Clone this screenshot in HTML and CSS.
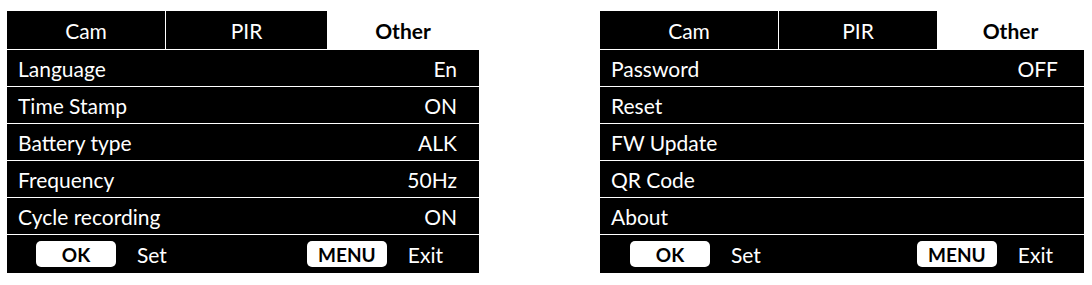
FILE: index.html
```html
<!DOCTYPE html>
<html lang="en">
<head>
  <meta charset="UTF-8" />
  <title>Other settings</title>
  <link rel="stylesheet" href="styles.css">
</head>
<body>
  <div class="screens">
    <!-- Экран 1 -->
    <div class="screen screen-left">
      <div class="tabs">
        <div class="tab">Cam</div>
        <div class="tab">PIR</div>
        <div class="tab tab-active">Other</div>
      </div>
      <div class="row"><span>Language</span><span>En</span></div>
      <div class="row"><span>Time Stamp</span><span>ON</span></div>
      <div class="row"><span>Battery type</span><span>ALK</span></div>
      <div class="row"><span>Frequency</span><span>50Hz</span></div>
      <div class="row"><span>Cycle recording</span><span>ON</span></div>
      <div class="footer">
        <div class="hint">
          <span class="key">OK</span><span class="label">Set</span>
        </div>
        <div class="hint">
          <span class="key">MENU</span><span class="label">Exit</span>
        </div>
      </div>
    </div>

    <!-- Экран 2 -->
    <div class="screen screen-right">
      <div class="tabs">
        <div class="tab">Cam</div>
        <div class="tab">PIR</div>
        <div class="tab tab-active">Other</div>
      </div>
      <div class="row"><span>Password</span><span>OFF</span></div>
      <div class="row"><span>Reset</span><span></span></div>
      <div class="row"><span>FW Update</span><span></span></div>
      <div class="row"><span>QR Code</span><span></span></div>
      <div class="row"><span>About</span><span></span></div>
      <div class="footer">
        <div class="hint">
          <span class="key">OK</span><span class="label">Set</span>
        </div>
        <div class="hint">
          <span class="key">MENU</span><span class="label">Exit</span>
        </div>
      </div>
    </div>
  </div>
</body>
</html>
```

FILE: styles.css
```css
html, body {
  margin: 0;
  padding: 0;
  background: #fff;
  font-family: Lato, "Open Sans", sans-serif;
}
.screens {
  display: flex;
  padding: 11px 0 0 7px;
  gap: 121px;
}
.screen {
  background: #000;
  color: #fff;
  display: flex;
  flex-direction: column;
  font-size: 21px;
}
.screen-left {
  width: 472px;
}
.screen-right {
  width: 484px;
}
.tabs {
  display: grid;
  height: 38px;
  border-bottom: 1px solid #fff;
}
.screen-left .tabs {
  grid-template-columns: 159px 161px 1fr;
}
.screen-right .tabs {
  grid-template-columns: 179px 158px 1fr;
}
.tab {
  display: flex;
  align-items: center;
  justify-content: center;
}
.tab:first-child {
  border-right: 1px solid #fff;
}
.tab-active {
  background: #fff;
  color: #000;
  font-weight: 700;
}
.row {
  height: 36px;
  display: flex;
  align-items: center;
  justify-content: space-between;
  padding: 0 22px 0 11px;
  border-bottom: 1px solid #fff;
}
.screen-right .row {
  padding-right: 26px;
}
.footer {
  height: 38px;
  display: flex;
  align-items: center;
  justify-content: space-between;
  padding: 0 36px 0 29px;
}
.screen-right .footer {
  padding: 0 31px 0 30px;
}
.hint {
  display: flex;
  align-items: center;
  gap: 21px;
}
.key {
  width: 80px;
  height: 26px;
  background: #fff;
  color: #000;
  border-radius: 5px;
  font-weight: 700;
  font-size: 19px;
  display: flex;
  align-items: center;
  justify-content: center;
}
```
